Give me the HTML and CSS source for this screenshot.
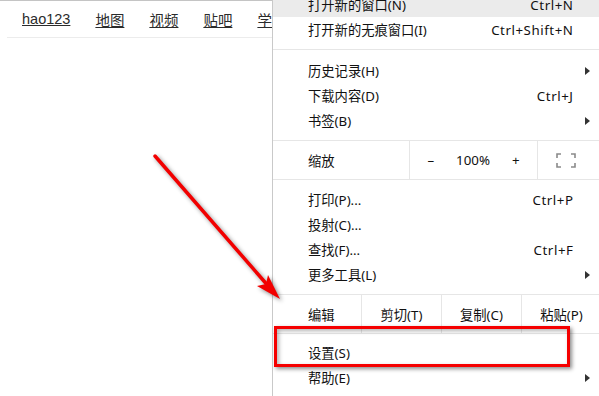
FILE: index.html
```html
<!DOCTYPE html>
<html lang="zh-CN">
  <head>
    <meta charset="UTF-8" />
    <title>设置菜单</title>
    <link rel="stylesheet" href="styles.css">
  </head>
  <body>
    <div class="topbar">
      <nav class="nav">
        <a href="#">hao123</a>
        <a href="#">地图</a>
        <a href="#">视频</a>
        <a href="#">贴吧</a>
        <a href="#">学术</a>
      </nav>
    </div>

    <div class="menu">
      <div class="group">
        <div class="item active"><span>打开新的窗口(N)</span><span class="key">Ctrl+N</span></div>
        <div class="item"><span>打开新的无痕窗口(I)</span><span class="key">Ctrl+Shift+N</span></div>
      </div>
      <div class="group group-wide">
        <div class="item"><span>历史记录(H)</span><span class="sub"></span></div>
        <div class="item"><span>下载内容(D)</span><span class="key">Ctrl+J</span></div>
        <div class="item"><span>书签(B)</span><span class="sub"></span></div>
      </div>
      <div class="split">
        <div class="cell label">缩放</div>
        <div class="cell zoom">
          <span>–</span>
          <span>100%</span>
          <span>+</span>
        </div>
        <div class="cell full">
          <svg width="20" height="15" viewBox="0 0 20 15">
            <path d="M1 5V1h4M15 1h4v4M19 10v4h-4M5 14H1v-4" fill="none" stroke="#8a8a8a" stroke-width="1.6"/>
          </svg>
        </div>
      </div>
      <div class="group">
        <div class="item"><span>打印(P)...</span><span class="key">Ctrl+P</span></div>
        <div class="item"><span>投射(C)...</span></div>
        <div class="item"><span>查找(F)...</span><span class="key">Ctrl+F</span></div>
        <div class="item"><span>更多工具(L)</span><span class="sub"></span></div>
      </div>
      <div class="split">
        <div class="cell label edit">编辑</div>
        <div class="cell btn">剪切(T)</div>
        <div class="cell btn">复制(C)</div>
        <div class="cell btn">粘贴(P)</div>
      </div>
      <div class="group group-last">
        <div class="item"><span>设置(S)</span></div>
        <div class="item"><span>帮助(E)</span><span class="sub"></span></div>
      </div>
    </div>

    <div class="callout"></div>

    <svg class="arrow" width="599" height="396" viewBox="0 0 599 396">
      <line x1="155" y1="156" x2="270" y2="288" stroke="#f20000" stroke-width="3.5" stroke-linecap="round"/>
      <polygon points="280,299 257,286 266,284 268,275" fill="#f20000"/>
    </svg>
  </body>
</html>
```

FILE: styles.css
```css
body {
  margin: 0;
  width: 599px;
  height: 396px;
  overflow: hidden;
  background-color: #fff;
  position: relative;
  font-family: "Noto Sans", "Noto Sans CJK SC", sans-serif;
}
.topbar {
  border-top: 1px solid #c4c4c4;
  width: 272px;
}
.nav {
  display: flex;
  gap: 25px;
  height: 36px;
  align-items: center;
  margin-left: 7px;
  padding-left: 15px;
  border-bottom: 1px solid #ececec;
  white-space: nowrap;
  overflow: hidden;
}
.nav a {
  color: #2b2b2b;
  font-family: "Liberation Sans", "Noto Sans CJK SC", sans-serif;
  font-size: 14.5px;
  text-decoration: underline;
}
.menu {
  position: absolute;
  left: 272px;
  top: -15px;
  width: 328px;
  background-color: #fff;
  border-left: 1px solid #c9c9c9;
  font-size: 13.3px;
  color: #111;
}
.group {
  padding: 7px 0;
}
.group-wide {
  padding-top: 8px;
  border-top: 1px solid #e6e6e6;
}
.group-last {
  padding-top: 6px;
}
.item {
  height: 25px;
  display: flex;
  align-items: center;
  justify-content: space-between;
  padding-left: 35px;
  padding-right: 28px;
}
.item.active {
  background-color: #ebebeb;
}
.key {
  letter-spacing: 0.55px;
  margin-right: -0.5px;
}
.sub {
  width: 0;
  height: 0;
  border-left: 5px solid #333;
  border-top: 4px solid transparent;
  border-bottom: 4px solid transparent;
  margin-right: -17px;
}
.split {
  display: flex;
  height: 38px;
  border-top: 1px solid #e6e6e6;
  border-bottom: 1px solid #e6e6e6;
}
.cell {
  display: flex;
  align-items: center;
  justify-content: center;
  box-sizing: border-box;
}
.cell + .cell {
  border-left: 1px solid #e6e6e6;
}
.label {
  justify-content: flex-start;
  padding-left: 35px;
  width: 136px;
}
.label.edit {
  width: 88px;
}
.zoom {
  width: 128px;
  gap: 22px;
}
.full {
  flex: 1;
  padding-right: 8px;
}
.btn {
  width: 80px;
}
.callout {
  position: absolute;
  left: 274px;
  top: 326px;
  width: 290px;
  height: 35px;
  border: 3px solid #f50000;
  box-shadow: 2px 2px 4px rgba(0, 0, 0, 0.45), inset 2px 2px 4px rgba(0, 0, 0, 0.3);
}
.arrow {
  position: absolute;
  left: 0;
  top: 0;
  filter: drop-shadow(2px 2px 2px rgba(0, 0, 0, 0.45));
}
```
